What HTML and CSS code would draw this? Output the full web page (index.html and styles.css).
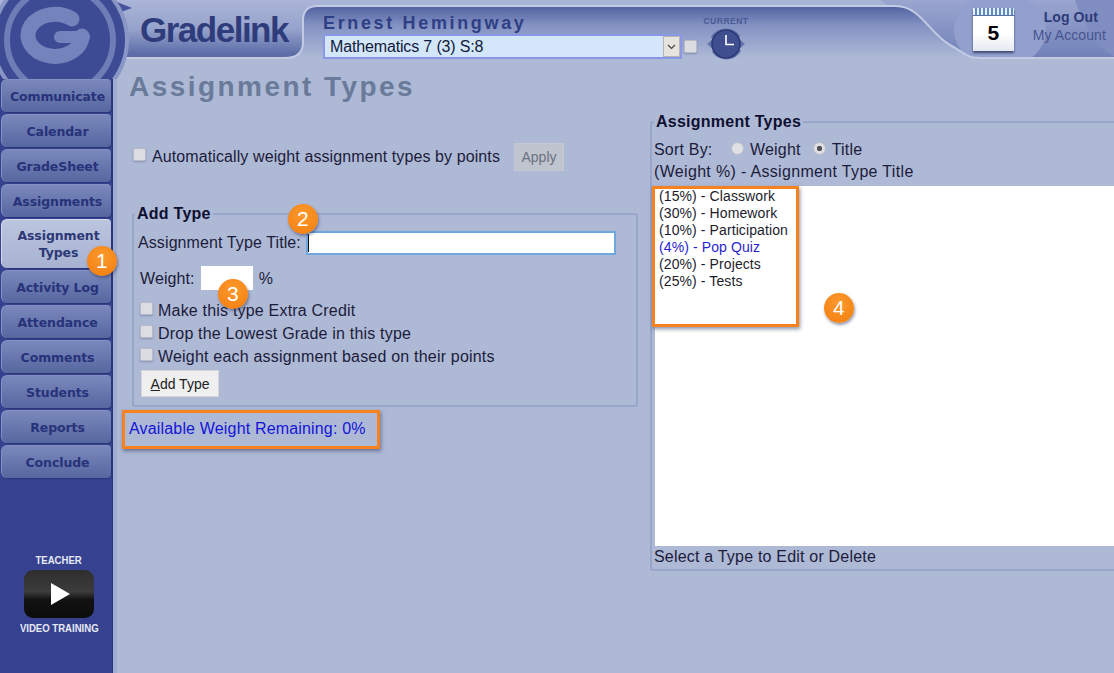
FILE: index.html
```html
<!DOCTYPE html>
<html lang="en">
<head>
<meta charset="utf-8">
<title>Assignment Types</title>
<link rel="stylesheet" href="styles.css">
</head>
<body>
<div class="app">
  <header class="topbar">
    <svg class="topbar-bg" width="1114" height="59" viewBox="0 0 1114 59" aria-hidden="true">
      <defs>
        <linearGradient id="bar" x1="0" y1="0" x2="0" y2="1"><stop offset="0" stop-color="#aab5d7"/><stop offset=".5" stop-color="#95a2cb"/><stop offset=".92" stop-color="#5c6ca7"/><stop offset="1" stop-color="#5c6ca7"/></linearGradient>
        <linearGradient id="mid" gradientUnits="userSpaceOnUse" x1="0" y1="7" x2="0" y2="58"><stop offset="0" stop-color="#5263a2"/><stop offset=".35" stop-color="#8291c2"/><stop offset="1" stop-color="#aeb9d6"/></linearGradient>
        <linearGradient id="right" x1="0" y1="0" x2="0" y2="1"><stop offset="0" stop-color="#9aa6d0"/><stop offset="1" stop-color="#7080b8"/></linearGradient>
      </defs>
      <rect width="1114" height="59" fill="url(#bar)"/>
      <path d="M880 0H1114V59H960Z" fill="url(#right)"/>
      <ellipse cx="1000" cy="30" rx="46" ry="38" fill="#93a0ce"/>
      <path d="M1075 0C1085 30 1100 50 1114 56V0Z" fill="#7f8dc1"/>
      <path d="M113 80V70Q113 58 125 58H285Q303 58 303 42V20Q303 6 318 6H896C920 6 930 34 950 45S965 58 985 58H1114V80Z" fill="url(#mid)" stroke="#c3cbe3" stroke-width="2"/>
    </svg>
    <div class="brand">Gradelink</div>
    <div class="student">
      <div class="student-name">Ernest Hemingway</div>
      <div class="class-row">
        <div class="class-select">
          <span class="class-value">Mathematics 7 (3) S:8</span>
          <span class="class-arrow"><svg width="9" height="6" viewBox="0 0 9 6"><path d="M1 1l3.5 3.5L8 1" fill="none" stroke="#444" stroke-width="1.2"/></svg></span>
        </div>
        <span class="check check-top"></span>
        <div class="current">
          <span class="current-label">CURRENT</span>
          <svg width="40" height="36" viewBox="0 0 40 36" aria-hidden="true">
            <path d="M6 12A16 16 0 0 1 33 11M34 24A16 16 0 0 1 7 25" fill="none" stroke="#6474ad" stroke-width="3"/>
            <path d="M1 18l6-5v10zM39 18l-6-5v10z" fill="#6474ad"/>
            <circle cx="20" cy="18" r="14" fill="#3f4e8e" stroke="#2c3a75" stroke-width="1.5"/>
            <path d="M20 9v9.500h8" fill="none" stroke="#fff" stroke-width="1.6"/>
          </svg>
        </div>
      </div>
    </div>
    <div class="calendar">
      <div class="calendar-rings"></div>
      <div class="calendar-day">5</div>
    </div>
    <div class="account">
      <a class="logout">Log Out</a>
      <a class="my-account">My Account</a>
    </div>
  </header>

  <svg class="logo" width="136" height="79" viewBox="0 0 136 79" aria-hidden="true">
    <path d="M112 0L132 8 118 13 122 24 112 30Z" fill="#46539b"/>
    <circle cx="60" cy="40" r="69" fill="#8a97c6"/>
    <circle cx="60" cy="40" r="65" fill="#3d4a94"/>
    <circle cx="60" cy="40" r="53" fill="none" stroke="#6e7db6" stroke-width="6"/>
    <path d="M72 19A27 21 0 1 0 82 36" fill="none" stroke="#7483bb" stroke-width="15" stroke-linecap="round"/>
    <path d="M84 37H60" fill="none" stroke="#7483bb" stroke-width="12" stroke-linecap="round"/>
  </svg>

  <nav class="sidebar">
    <a class="nav-item">Communicate</a>
    <a class="nav-item">Calendar</a>
    <a class="nav-item">GradeSheet</a>
    <a class="nav-item">Assignments</a>
    <a class="nav-item nav-active">Assignment Types</a>
    <a class="nav-item">Activity Log</a>
    <a class="nav-item">Attendance</a>
    <a class="nav-item">Comments</a>
    <a class="nav-item">Students</a>
    <a class="nav-item">Reports</a>
    <a class="nav-item">Conclude</a>
    <div class="training">
      <span class="training-text">TEACHER</span>
      <div class="play"><svg width="19" height="22" viewBox="0 0 19 22"><path d="M0 0L19 11 0 22Z" fill="#fff"/></svg></div>
      <span class="training-text">VIDEO TRAINING</span>
    </div>
  </nav>

  <main class="content">
    <h1 class="page-title">Assignment Types</h1>
    <div class="columns">
      <div class="left-col">
        <div class="auto-row">
          <span class="check"></span>
          <span>Automatically weight assignment types by points</span>
          <button class="btn btn-disabled" type="button">Apply</button>
        </div>
        <fieldset class="box add-box">
          <legend>Add Type</legend>
          <div class="title-row">
            <label>Assignment Type Title:</label>
            <input class="input input-title" type="text">
          </div>
          <div class="weight-row">
            <label>Weight:</label>
            <input class="input input-weight" type="text">
            <span>%</span>
          </div>
          <div class="check-row"><span class="check"></span><span>Make this type Extra Credit</span></div>
          <div class="check-row"><span class="check"></span><span>Drop the Lowest Grade in this type</span></div>
          <div class="check-row"><span class="check"></span><span>Weight each assignment based on their points</span></div>
          <button class="btn btn-add" type="button"><u>A</u>dd Type</button>
        </fieldset>
        <p class="remaining">Available Weight Remaining: 0%</p>
      </div>
      <fieldset class="box types-box">
        <legend>Assignment Types</legend>
        <div class="sort-row">
          <span class="sort-label">Sort By:</span>
          <span class="radio"></span><span class="sort-opt">Weight</span>
          <span class="radio radio-on"></span><span>Title</span>
        </div>
        <div class="list-head">(Weight %) - Assignment Type Title</div>
        <ul class="type-list">
          <li>(15%) - Classwork</li>
          <li>(30%) - Homework</li>
          <li>(10%) - Participation</li>
          <li class="type-blue">(4%) - Pop Quiz</li>
          <li>(20%) - Projects</li>
          <li>(25%) - Tests</li>
        </ul>
        <div class="list-foot">Select a Type to Edit or Delete</div>
      </fieldset>
    </div>
  </main>

  <div class="callout callout-remaining"></div>
  <div class="callout callout-list"></div>
  <span class="badge badge-1">1</span>
  <span class="badge badge-2">2</span>
  <span class="badge badge-3">3</span>
  <span class="badge badge-4">4</span>
</div>
</body>
</html>
```
FILE: styles.css
```css
* { box-sizing: border-box; }
html, body { margin: 0; padding: 0; }
body { font-family: "Liberation Sans", Arial, sans-serif; font-size: 16px; letter-spacing: .1px; color: #1c1c3a; overflow: hidden; }
.app {
  position: relative; width: 1114px; height: 673px; overflow: hidden;
  display: grid; grid-template-columns: 113px 1fr; grid-template-rows: 59px 1fr;
  background: #aeb9d6;
}

/* header */
.topbar { grid-column: 1 / 3; position: relative; display: flex; align-items: flex-start; z-index: 1; height: 59px; }
.topbar-bg { position: absolute; left: 0; top: 0; }
.brand {
  position: relative; margin: 9px 0 0 140px; width: 183px;
  font-size: 35px; line-height: 42px; font-weight: 700; letter-spacing: -1.5px; color: #2f3c7c;
}
.student { position: relative; flex: none; width: 427px; padding-top: 13px; }
.student-name { font-size: 18px; line-height: 21px; font-weight: 700; letter-spacing: 2.65px; color: #2f3f85; }
.class-row { display: flex; align-items: flex-start; margin-top: 0; }
.class-select {
  flex: none; width: 359px; height: 25px; display: flex; justify-content: space-between;
  background: #d4e6fa; border: 2px solid #8a97e6;
}
.class-value { padding-left: 5px; font-size: 16px; line-height: 21px; letter-spacing: -.15px; color: #111a3a; }
.class-arrow { width: 17px; height: 21px; background: #e6e4de; border: 1px solid #b5b5b5; display: flex; align-items: center; justify-content: center; }
.check { flex: none; display: inline-block; width: 13px; height: 13px; border-radius: 2px; background: #dcdde2; border: 1px solid #b9bcc8; box-shadow: 0 1px 2px rgba(60, 70, 110, .35); }
.check-top { margin: 6px 0 0 2px; }
.current { position: relative; flex: none; display: flex; flex-direction: column; align-items: center; width: 50px; margin: -18px 0 0 4px; }
.current-label { font-size: 8.500px; line-height: 10px; font-weight: 700; letter-spacing: .5px; color: #4a5a94; }
.calendar { position: relative; flex: none; width: 41px; height: 43px; margin: 8px 0 0 223px; box-shadow: 0 2px 2px rgba(30, 40, 80, .7); background: linear-gradient(#fff 60%, #e4e8f0); }
.calendar-rings { height: 8px; background: repeating-linear-gradient(90deg, #e8eefa 0 2px, #5e8cc0 2px 4px); border-bottom: 1px solid #5272a8; }
.calendar-day { font-size: 21px; line-height: 33px; font-weight: 700; color: #000; text-align: center; }
.account { position: relative; flex: 1; display: flex; flex-direction: column; align-items: flex-end; padding: 8px 8px 0 0; font-size: 14px; line-height: 18px; }
.logout { font-weight: 700; color: #2f3b78; margin-right: 8px; }
.my-account { color: #47548f; }

/* logo */
.logo { position: absolute; left: 0; top: 0; z-index: 2; }

/* sidebar */
.sidebar { background: #36428f; padding: 20px 0 0 1px; display: flex; flex-direction: column; gap: 2px; border-right: 1px solid #2b3678; }
.nav-item {
  width: 110px; height: 33px; padding-left: 2px; display: flex; align-items: center; justify-content: center; text-align: center;
  border-radius: 6px 4px 4px 6px; border: 1px solid #8491c0; border-width: 1px 0 0 1px;
  background: linear-gradient(#7a88bc, #56669f);
  font-family: "DejaVu Sans", sans-serif; font-size: 12.500px; font-weight: 700; letter-spacing: -.1px; color: #27327a;
  box-shadow: 1px 1px 1px #2b3678;
}
.nav-active { height: 49px; padding: 0 10px 0 14px; line-height: 17px; background: linear-gradient(#bcc5de, #a7b2d2); color: #2c3876; border-color: #d4dbed; }
.training { margin: 73px 0 0 5px; display: flex; flex-direction: column; align-items: center; font-family: "Liberation Sans", sans-serif; font-size: 11px; line-height: 14px; font-weight: 700; letter-spacing: 0; color: #e6e9f6; }
.training-text { transform: scaleX(.87); white-space: nowrap; }
.play { width: 70px; height: 48px; margin: 3px 0; padding-left: 3px; border-radius: 9px; background: linear-gradient(#2e2e2e, #3c3c3c 45%, #111 62%, #0c0c0c); display: flex; align-items: center; justify-content: center; }

/* content */
.content { position: relative; min-width: 0; padding: 0 0 0 12px; border-left: 4px solid #a0acd0; }
.page-title { margin: 11px 0 0; font-size: 28px; line-height: 34px; font-weight: 700; letter-spacing: 2.45px; color: #6a7a9a; }
.columns { display: flex; align-items: flex-start; margin-top: 9px; }
.left-col { width: 521px; flex: none; padding-top: 30px; }
.auto-row { display: flex; align-items: center; height: 28px; padding-left: 4px; }
.auto-row .check { margin: -6px 6px 0 0; }
.btn { font: inherit; border: 1px solid #d5d5d5; padding: 0; }
.btn-disabled { width: 50px; height: 28px; margin-left: 14px; font-size: 14px; background: #c0c4cf; border-color: #c4c8d2; color: #6a7280; }
.box { margin: 0; min-width: 0; padding: 0; border: 2px solid #98a5c9; border-radius: 3px; }
.box legend { padding: 0 2px; font-weight: 700; font-size: 16px; line-height: 18px; letter-spacing: .25px; color: #0e1030; }
.add-box { width: 506px; height: 202px; margin: 34px 0 0 3px; padding: 0 0 0 4px; }
.add-box legend { margin-left: -3px; }
.title-row { display: flex; align-items: center; gap: 5px; margin-top: 8px; height: 24px; }
.input { background: #fff; border: 0; padding: 0; outline: none; }
.input-title { width: 310px; height: 24px; border: 2px solid #6ea6de; background: linear-gradient(#111, #111) 0 1px / 1px 18px no-repeat #fff; }
.weight-row { display: flex; align-items: center; margin: 12px 0 0 2px; height: 24px; }
.input-weight { width: 52px; height: 24px; margin: -2px 6px 0 6px; }
.check-row { display: flex; align-items: center; height: 23px; padding-left: 2px; letter-spacing: .2px; }
.check-row .check { margin: -4px 5px 0 0; }
.weight-row + .check-row { margin-top: 8px; }
.btn-add { display: block; width: 78px; height: 27px; margin: 2px 0 0 3px; font-size: 14px; background: #efefef; color: #222; }
.remaining { margin: 12px 0 0; font-size: 16px; line-height: 20px; letter-spacing: .17px; color: #1414d8; }
.types-box { flex: none; width: 520px; height: 458px; padding: 0 0 0 2px; }
.sort-row { display: flex; align-items: center; height: 22px; margin-top: 8px; letter-spacing: .2px; }
.sort-label { width: 77px; }
.sort-opt { margin-right: 12px; }
.radio { flex: none; width: 13px; height: 13px; margin: -4px 6px 0 0; border-radius: 50%; background: #dfe0e4; border: 1px solid #babdc8; display: flex; }
.radio-on { background: radial-gradient(#555 0 2.500px, #dfe0e4 3px); }
.list-head { height: 22px; line-height: 22px; letter-spacing: .33px; }
.type-list { list-style: none; margin: 3px 0 0 1px; padding: 2px 0 0 4px; height: 360px; background: #fff; font-size: 14px; line-height: 17px; letter-spacing: .1px; color: #1c1c2c; }
.type-blue { color: #2a1fd0; }
.list-foot { line-height: 21px; letter-spacing: .2px; }

/* annotations */
.callout { position: absolute; z-index: 3; border: 3px solid #f5811f; box-shadow: 1px 2px 4px rgba(40, 50, 90, .55); }
.callout-remaining { left: 122px; top: 410px; width: 258px; height: 39px; }
.callout-list { left: 652px; top: 186px; width: 147px; height: 141px; }
.badge {
  position: absolute; z-index: 4; width: 30px; height: 30px; border-radius: 50%;
  background: radial-gradient(circle at 50% 35%, #fb9a2e, #f47c0c);
  box-shadow: 1px 2px 3px rgba(40, 50, 90, .5);
  color: #fff; font-size: 21px; line-height: 30px; text-align: center;
}
.badge-1 { left: 87px; top: 246px; }
.badge-2 { left: 288px; top: 204px; }
.badge-3 { left: 218px; top: 279px; }
.badge-4 { left: 824px; top: 293px; }
```
